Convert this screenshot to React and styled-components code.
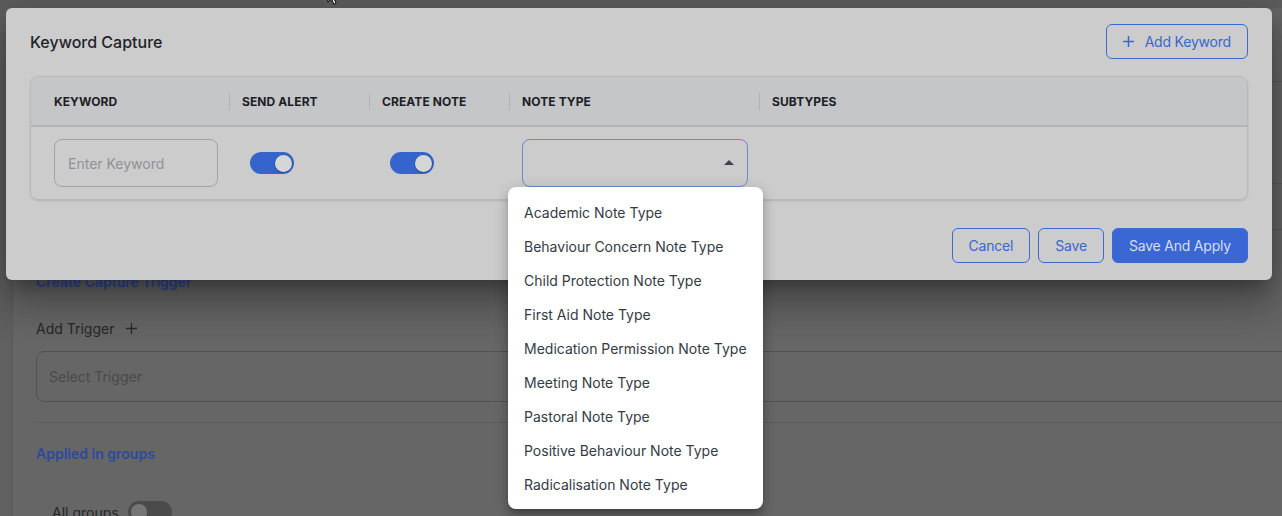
import React from "react";
import styled, { createGlobalStyle } from "styled-components";

const GlobalStyle = createGlobalStyle`
  html, body { margin: 0; padding: 0; width: 1282px; height: 516px; overflow: hidden; background: #666666; }
  body { font-family: Inter, "Noto Sans", sans-serif; -webkit-font-smoothing: antialiased; }
  * { box-sizing: border-box; }
`;

/* ---------- dimmed background page ---------- */
const Page = styled.div`
  position: relative;
  width: 1282px;
  height: 516px;
  display: flex;
  flex-direction: column;
  background: #666666;
  overflow: hidden;
`;
const TopBar = styled.div`
  height: 8px;
  flex-shrink: 0;
  background: #5e5e5e;
`;
const PageBody = styled.div`
  flex: 1;
  display: flex;
  min-height: 0;
`;
const SideStrip = styled.div`
  width: 13px;
  flex-shrink: 0;
  background: #606060;
  border-right: 1px solid #5a5a5a;
`;
const Main = styled.main`
  flex: 1;
  display: flex;
  flex-direction: column;
  padding-left: 23px;
  min-width: 0;
  & > * { flex-shrink: 0; }
`;
const Band = styled.div`
  height: ${(p) => p.$h}px;
  margin-left: -23px;
  border-bottom: 1px solid #595959;
`;
const SectionTitle = styled.h3`
  margin: ${(p) => p.$top}px 0 0;
  font-size: 14px;
  line-height: 20px;
  font-weight: 600;
  color: #2c4a9e;
`;
const TriggerRow = styled.div`
  margin-top: 26px;
  height: 20px;
  display: flex;
  align-items: center;
  gap: 12px;
  font-size: 14px;
  color: #262626;
`;
const TriggerSelect = styled.div`
  margin-top: 13px;
  margin-right: -30px;
  height: 51px;
  border: 1px solid #525252;
  border-radius: 8px;
  display: flex;
  align-items: center;
  padding-left: 12px;
  font-size: 14px;
  color: #4a4a4a;
`;
const Divider = styled.hr`
  margin: 20px -30px 0 0;
  border: 0;
  border-top: 1px solid #5b5b5b;
`;
const GroupsRow = styled.div`
  margin-top: 37px;
  padding-left: 16px;
  display: flex;
  align-items: center;
  gap: 9px;
  font-size: 14px;
  color: #262626;
`;
const OffToggle = styled.span`
  position: relative;
  width: 44px;
  height: 22px;
  border-radius: 11px;
  background: #4b4b4b;
  &::after {
    content: "";
    position: absolute;
    left: 3px;
    top: 3px;
    width: 16px;
    height: 16px;
    border-radius: 50%;
    background: #767676;
  }
`;

/* ---------- modal ---------- */
const Modal = styled.section`
  position: absolute;
  top: 8px;
  left: 6px;
  width: 1266px;
  background: #cccccc;
  border-radius: 6px;
  padding: 16px 24px 17px;
  display: flex;
  flex-direction: column;
  box-shadow: 0 11px 15px -7px rgba(0, 0, 0, 0.28), 0 24px 38px 3px rgba(0, 0, 0, 0.2),
    0 9px 46px 8px rgba(0, 0, 0, 0.16);
  z-index: 5;
`;
const ModalHeader = styled.header`
  height: 35px;
  display: flex;
  align-items: center;
  justify-content: space-between;
  margin-bottom: 17px;
`;
const ModalTitle = styled.h2`
  margin: 0;
  font-size: 16px;
  font-weight: 500;
  color: #1f232a;
`;
const Button = styled.button`
  height: 35px;
  padding: 0 16px;
  display: inline-flex;
  align-items: center;
  gap: 11px;
  border-radius: 6px;
  font-family: inherit;
  font-size: 14px;
  font-weight: 400;
  letter-spacing: -0.2px;
  cursor: pointer;
  border: 1px solid #3d69d2;
  background: ${(p) => (p.$primary ? "#3a67d3" : "transparent")};
  color: ${(p) => (p.$primary ? "#d6ddee" : "#3a66cf")};
`;
const Table = styled.div`
  display: grid;
  grid-template-columns: 198px 140px 140px 250px 1fr;
  border: 1px solid #b8b9bb;
  border-radius: 8px;
  box-shadow: 0 1px 2px rgba(0, 0, 0, 0.12);
`;
const HeadCell = styled.div`
  position: relative;
  height: 50px;
  display: flex;
  align-items: center;
  padding-left: ${(p) => (p.$first ? 23 : 13)}px;
  background: #c5c6c8;
  border-bottom: 2px solid #b3b4b6;
  font-size: 12px;
  font-weight: 700;
  letter-spacing: 0.1px;
  color: #1c2026;
  text-transform: uppercase;
  border-top-left-radius: ${(p) => (p.$first ? 7 : 0)}px;
  border-top-right-radius: ${(p) => (p.$last ? 7 : 0)}px;
  &::before {
    content: "";
    display: ${(p) => (p.$first ? "none" : "block")};
    position: absolute;
    left: 0;
    top: 16px;
    height: 17px;
    width: 1px;
    background: #b2b3b5;
  }
`;
const Cell = styled.div`
  height: 72px;
  display: flex;
  align-items: center;
  padding-left: ${(p) => (p.$first ? 23 : 13)}px;
`;
const KeywordInput = styled.input`
  width: 164px;
  height: 48px;
  border: 1px solid #a0a2a6;
  border-radius: 8px;
  background: transparent;
  padding: 0 13px;
  font-family: inherit;
  font-size: 14px;
  color: #1f232a;
  outline: none;
  &::placeholder { color: #8f9297; }
`;
const Switch = styled.span`
  position: relative;
  margin-left: 8px;
  width: 44px;
  height: 22px;
  border-radius: 11px;
  background: #3565cc;
  &::after {
    content: "";
    position: absolute;
    right: 2px;
    top: 2.5px;
    width: 17px;
    height: 17px;
    border-radius: 50%;
    background: #d6d6d6;
    box-shadow: 0 0 0 1px rgba(40, 80, 170, 0.35), 0 1px 2px rgba(0, 0, 0, 0.25);
  }
`;
const SelectBox = styled.div`
  position: relative;
  width: 226px;
  height: 48px;
  border: 1px solid #6b89d2;
  border-radius: 8px;
  &::after {
    content: "";
    position: absolute;
    right: 13px;
    top: 20px;
    border-left: 5px solid transparent;
    border-right: 5px solid transparent;
    border-bottom: 5px solid #3d434c;
  }
`;
const Menu = styled.ul`
  position: absolute;
  top: calc(100% + 1px);
  left: -15px;
  width: 255px;
  margin: 0;
  padding: 8px 0;
  list-style: none;
  background: #ffffff;
  border-radius: 8px;
  box-shadow: 0 5px 5px -3px rgba(0, 0, 0, 0.2), 0 8px 10px 1px rgba(0, 0, 0, 0.14),
    0 3px 14px 2px rgba(0, 0, 0, 0.12);
  z-index: 20;
`;
const MenuItem = styled.li`
  height: 34px;
  display: flex;
  align-items: center;
  padding-left: 16px;
  font-size: 14px;
  color: #353b45;
  white-space: nowrap;
`;
const Footer = styled.footer`
  margin-top: 28px;
  display: flex;
  justify-content: flex-end;
  gap: 8px;
`;
const Cursor = styled.svg`
  position: absolute;
  top: -14px;
  left: 327px;
  z-index: 30;
`;

const PlusIcon = ({ size = 11, color = "currentColor", w = 1.5 }) => (
  <svg width={size} height={size} viewBox="0 0 11 11" fill="none">
    <path d="M5.5 0.5v10M0.5 5.5h10" stroke={color} strokeWidth={w} strokeLinecap="round" />
  </svg>
);

const noteTypes = [
  "Academic Note Type",
  "Behaviour Concern Note Type",
  "Child Protection Note Type",
  "First Aid Note Type",
  "Medication Permission Note Type",
  "Meeting Note Type",
  "Pastoral Note Type",
  "Positive Behaviour Note Type",
  "Radicalisation Note Type",
];

export default function App() {
  return (
    <>
      <GlobalStyle />
      <Page>
        <TopBar />
        <PageBody>
          <SideStrip />
          <Main>
            <Band $h={74} />
            <Band $h={102} />
            <Band $h={46} />
            <SectionTitle $top={42}>Create Capture Trigger</SectionTitle>
            <TriggerRow>
              Add Trigger <PlusIcon color="#2a2a2a" w={1.3} />
            </TriggerRow>
            <TriggerSelect>Select Trigger</TriggerSelect>
            <Divider />
            <SectionTitle $top={21}>Applied in groups</SectionTitle>
            <GroupsRow>
              All groups <OffToggle />
            </GroupsRow>
          </Main>
        </PageBody>

        <Modal>
          <ModalHeader>
            <ModalTitle>Keyword Capture</ModalTitle>
            <Button>
              <PlusIcon color="#3a66cf" />
              Add Keyword
            </Button>
          </ModalHeader>
          <Table>
            <HeadCell $first>Keyword</HeadCell>
            <HeadCell>Send Alert</HeadCell>
            <HeadCell>Create Note</HeadCell>
            <HeadCell>Note Type</HeadCell>
            <HeadCell $last>Subtypes</HeadCell>
            <Cell $first>
              <KeywordInput placeholder="Enter Keyword" />
            </Cell>
            <Cell>
              <Switch />
            </Cell>
            <Cell>
              <Switch />
            </Cell>
            <Cell>
              <SelectBox>
                <Menu>
                  {noteTypes.map((t) => (
                    <MenuItem key={t}>{t}</MenuItem>
                  ))}
                </Menu>
              </SelectBox>
            </Cell>
            <Cell />
          </Table>
          <Footer>
            <Button>Cancel</Button>
            <Button>Save</Button>
            <Button $primary>Save And Apply</Button>
          </Footer>
        </Modal>

        <Cursor width="12" height="20" viewBox="0 0 12 20">
          <path d="M1 1v15l3.5-3.3 2.4 5.6 2.2-0.9-2.4-5.5H11z" fill="#fff" stroke="#000" strokeWidth="1" strokeLinejoin="round" />
        </Cursor>
      </Page>
    </>
  );
}
